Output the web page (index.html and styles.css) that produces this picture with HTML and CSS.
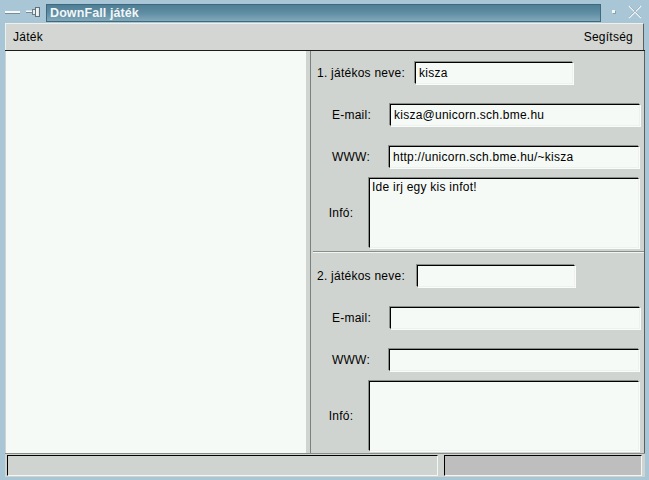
FILE: index.html
```html
<!DOCTYPE html>
<html lang="hu">
<head>
<meta charset="utf-8">
<title>DownFall játék</title>
<link rel="stylesheet" href="styles.css">
</head>
<body>
<div class="window">
  <div class="titlebar">
    <div class="tb-left">
      <span class="minbar"></span>
      <svg class="pin" width="15" height="11" viewBox="0 0 15 11">
        <line x1="0" y1="5.5" x2="6" y2="5.5" stroke="#f4f8fa" stroke-width="2"/>
        <line x1="0" y1="6.5" x2="6" y2="6.5" stroke="#7a8c96" stroke-width="1"/>
        <rect x="6.5" y="3.5" width="3" height="5" fill="#e8eef0" stroke="#6d7f89"/>
        <rect x="9.5" y="1.5" width="4" height="9" fill="#dfe7ea" stroke="#5f717b"/>
        <line x1="11" y1="2.5" x2="11" y2="9.5" stroke="#ffffff"/>
      </svg>
    </div>
    <div class="title">DownFall játék</div>
    <div class="tb-right">
      <span class="dot"></span>
      <svg class="close" width="14" height="14" viewBox="0 0 14 14">
        <path d="M1 1 L13 13 M13 1 L1 13" stroke="#eef3f5" stroke-width="1.4" fill="none"/>
        <path d="M2 1 L13 12 M12 1 L1 12" stroke="#8aa0ab" stroke-width="0.6" fill="none"/>
      </svg>
    </div>
  </div>
  <div class="menubar">
    <span class="menu-item">Játék</span>
    <span class="menu-item">Segítség</span>
  </div>
  <div class="main">
    <div class="canvas"></div>
    <div class="splitter"></div>
    <div class="side">
      <div class="group">
        <div class="row row-name">
          <label class="lbl lbl-name">1. játékos neve:</label>
          <input class="field field-name" type="text" value="kisza" readonly>
        </div>
        <div class="row row-gap">
          <label class="lbl lbl-mail">E-mail:</label>
          <input class="field field-wide" type="text" value="kisza@unicorn.sch.bme.hu" readonly>
        </div>
        <div class="row row-gap">
          <label class="lbl lbl-www">WWW:</label>
          <input class="field field-wide field-www" type="text" value="http://unicorn.sch.bme.hu/~kisza" readonly>
        </div>
        <div class="row row-info">
          <label class="lbl lbl-info">Infó:</label>
          <textarea class="area" readonly>Ide irj egy kis infot!</textarea>
        </div>
      </div>
      <div class="sep"></div>
      <div class="group">
        <div class="row row-name row-name2">
          <label class="lbl lbl-name lbl-name2">2. játékos neve:</label>
          <input class="field field-name" type="text" value="" readonly>
        </div>
        <div class="row row-gap">
          <label class="lbl lbl-mail">E-mail:</label>
          <input class="field field-wide" type="text" value="" readonly>
        </div>
        <div class="row row-gap">
          <label class="lbl lbl-www">WWW:</label>
          <input class="field field-wide field-www" type="text" value="" readonly>
        </div>
        <div class="row row-info">
          <label class="lbl lbl-info">Infó:</label>
          <textarea class="area" readonly></textarea>
        </div>
      </div>
    </div>
  </div>
  <div class="statusbar">
    <div class="st st-main"></div>
    <div class="st st-side"></div>
  </div>
</div>
</body>
</html>
```
FILE: styles.css
```css
* { box-sizing: border-box; }
html, body {
  margin: 0;
  padding: 0;
  width: 649px;
  height: 480px;
  overflow: hidden;
  background: #a8c6d6;
}
.window {
  width: 649px;
  height: 480px;
  display: flex;
  flex-direction: column;
  padding: 0 4px 3px 5px;
  background: #a8c6d6;
  font-family: "Liberation Sans", Arial, sans-serif;
  font-size: 12px;
  letter-spacing: 0.25px;
  color: #000;
}
.titlebar {
  height: 23px;
  flex: none;
  display: flex;
  align-items: center;
  margin-left: -5px;
  margin-right: -4px;
}
.tb-left {
  width: 46px;
  flex: none;
  display: flex;
  align-items: center;
  padding-left: 5px;
  gap: 6px;
}
.minbar {
  display: block;
  width: 15px;
  height: 2px;
  background: #f4f8fa;
  box-shadow: 0 1px 0 #7a8c96;
}
.pin { display: block; }
.title {
  width: 555px;
  height: 18px;
  margin-top: 2px;
  flex: none;
  border: 1px solid #3f6a7e;
  background: linear-gradient(to bottom, #4f7f96 0%, #5f8da3 50%, #82a8ba 100%);
  color: #f2f6f8;
  font-weight: bold;
  font-size: 12.5px;
  letter-spacing: 0.1px;
  line-height: 16px;
  padding-left: 3px;
  white-space: nowrap;
}
.tb-right {
  flex: 1;
  display: flex;
  align-items: center;
  padding-left: 11px;
}
.dot {
  display: block;
  width: 3px;
  height: 3px;
  background: #f4f8fa;
  box-shadow: 1px 1px 0 #8aa0ab;
}
.close {
  display: block;
  margin-left: 13px;
}
.menubar {
  height: 27px;
  flex: none;
  display: flex;
  justify-content: space-between;
  align-items: center;
  background: #d3d6d2;
  border-top: 1px solid #eef0ee;
  border-left: 1px solid #eef0ee;
  border-right: 1px solid #5c605c;
  padding: 0 10px 0 7px;
  margin-right: 1px;
}
.main {
  height: 403px;
  flex: none;
  display: flex;
  border-top: 1px solid #1c1c1c;
  overflow: hidden;
}
.canvas {
  width: 301px;
  flex: none;
  background: #f6faf6;
  border-left: 1px solid #d0d4d0;
}
.splitter {
  width: 4px;
  flex: none;
  background: #d0d4d0;
}
.side {
  flex: 1;
  background: #d0d4d0;
  border-left: 1px solid #7d817d;
  border-right: 1px solid #5c605c;
  overflow: hidden;
}
.group {
  display: flex;
  flex-direction: column;
}
.row {
  display: flex;
  align-items: center;
  flex: none;
}
.row-name { margin-top: 11px; height: 22px; }
.row-name2 { margin-top: 12px; }
.row-gap { margin-top: 20px; height: 22px; }
.row-info { margin-top: 10px; height: 70px; }
.lbl {
  flex: none;
  white-space: nowrap;
}
.lbl-name { width: 104px; padding-left: 6px; }
.lbl-name2 { width: 106px; }
.lbl-mail { width: 77px; margin-left: 2px; text-align: center; }
.lbl-www { width: 76px; margin-left: 2px; text-align: center; }
.lbl-info { width: 56px; margin-left: 2px; text-align: center; }
.field, .area {
  font-family: "Liberation Sans", Arial, sans-serif;
  font-size: 12px;
  letter-spacing: 0.25px;
  color: #000;
  background: #f6faf6;
  border: 1px solid;
  border-color: #000 #eef2ee #eef2ee #000;
  box-shadow: -1px -1px 0 #8a8e8a, 1px 1px 0 #fafcfa;
  margin: 0;
  outline: none;
  border-radius: 0;
}
.field {
  height: 22px;
  padding: 0 3px;
  line-height: 20px;
}
.field-name { width: 158px; }
.field-wide { width: 250px; }
.area {
  width: 270px;
  height: 70px;
  padding: 1px 2px;
  line-height: 14px;
  resize: none;
  overflow: hidden;
  display: block;
}
.sep {
  margin: 3px 0 0 2px;
  height: 2px;
  border-top: 1px solid #8a8e8a;
  border-bottom: 1px solid #f2f5f2;
  flex: none;
}
.statusbar {
  height: 24px;
  flex: none;
  display: flex;
  gap: 6px;
  padding: 1px 0 1px 2px;
  background: #d0d4d0;
  border-top: 1px solid #8a8e8a;
}
.st {
  height: 21px;
  border: 1px solid;
  border-color: #000 #f4f6f4 #f4f6f4 #000;
}
.st-main { width: 431px; background: #d0d4d0; }
.st-side { width: 198px; background: #bebebe; }
```
